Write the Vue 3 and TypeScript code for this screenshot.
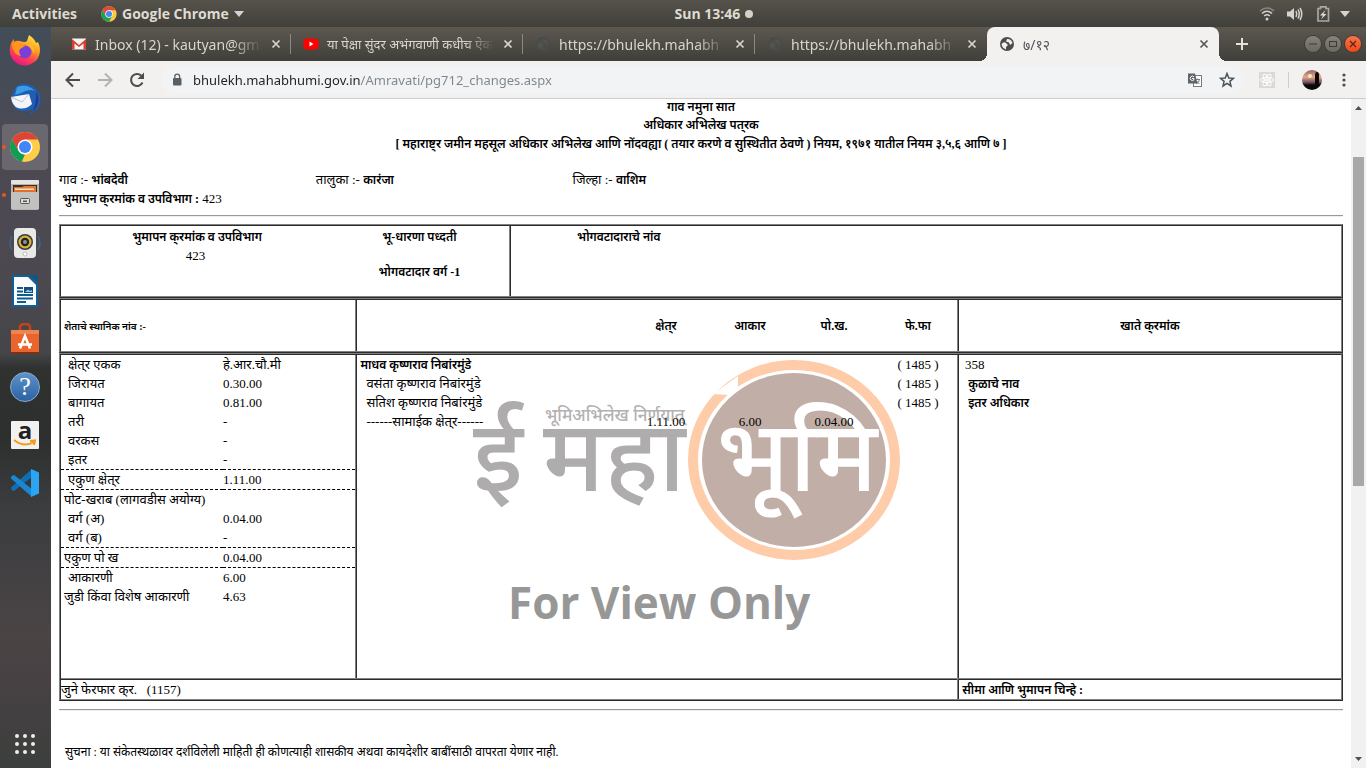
<script setup lang="ts">
interface Tab { title: string; icon: 'gmail' | 'youtube' | 'dim' | 'globe'; active?: boolean }
interface LandRow { label: string; value: string; indent?: boolean; rule?: boolean }
interface Owner { name: string; area?: string; tax?: string; waste?: string; mutation?: string; bold?: boolean }

const tabs: Tab[] = [
  { title: 'Inbox (12) - kautyan@gm', icon: 'gmail' },
  { title: 'या पेक्षा सुंदर अभंगवाणी कधीच ऐक', icon: 'youtube' },
  { title: 'https://bhulekh.mahabh', icon: 'dim' },
  { title: 'https://bhulekh.mahabh', icon: 'dim' },
  { title: '७/१२', icon: 'globe', active: true },
]

const land: LandRow[] = [
  { label: 'क्षेत्‌र एकक', value: 'हे.आर.चौ.मी', indent: true },
  { label: 'जिरायत', value: '0.30.00', indent: true },
  { label: 'बागायत', value: '0.81.00', indent: true },
  { label: 'तरी', value: '-', indent: true },
  { label: 'वरकस', value: '-', indent: true },
  { label: 'इतर', value: '-', indent: true, rule: true },
  { label: 'एकुण क्षेत्‌र', value: '1.11.00', indent: true, rule: true },
  { label: 'पोट-खराब (लागवडीस अयोग्य)', value: '' },
  { label: 'वर्ग (अ)', value: '0.04.00', indent: true },
  { label: 'वर्ग (ब)', value: '-', indent: true, rule: true },
  { label: 'एकुण पो ख', value: '0.04.00', rule: true },
  { label: 'आकारणी', value: '6.00', indent: true },
  { label: 'जुडी किंवा विशेष आकारणी', value: '4.63' },
]

const owners: Owner[] = [
  { name: 'माधव कृष्णराव निबांरमुंडे', mutation: '( 1485 )', bold: true },
  { name: 'वसंता कृष्णराव निबांरमुंडे', mutation: '( 1485 )' },
  { name: 'सतिश कृष्णराव निबांरमुंडे', mutation: '( 1485 )' },
  { name: '------सामाईक क्षेत्‌र------', area: '1.11.00', tax: '6.00', waste: '0.04.00' },
]
</script>

<template>
  <div class="desktop">
    <header class="topbar">
      <div class="top-left">
        <button class="top-btn">Activities</button>
        <button class="top-btn app-menu">
          <svg width="16" height="16" viewBox="0 0 48 48">
            <circle cx="24" cy="24" r="23" fill="#fbc93f" />
            <path d="M4 12.500A23 23 0 0 1 44 12.500L24 12.500L14 30Z" fill="#dd4b3e" />
            <path d="M4 12.500L14 30L34 30L24 47A23 23 0 0 1 4 12.500Z" fill="#1fa05a" />
            <circle cx="24" cy="24" r="11" fill="#fff" /><circle cx="24" cy="24" r="9" fill="#4688f4" />
          </svg>
          Google Chrome
          <svg width="10" height="6" viewBox="0 0 10 6"><path d="M0 0H10L5 6Z" fill="#d5d3cf" /></svg>
        </button>
      </div>
      <button class="top-btn clock">Sun 13:46 <span class="dot"></span></button>
      <button class="top-btn tray" aria-label="System">
        <span class="indicators">
          <svg width="16" height="16" viewBox="0 0 16 16" fill="none" stroke="#d5d3cf" stroke-width="1.600">
            <path d="M1 5Q8 -1 15 5" stroke="#85837e" /><path d="M3 7.500Q8 3 13 7.500" /><path d="M5.200 10Q8 7.500 10.800 10" /><circle cx="8" cy="13" r="1.500" fill="#d5d3cf" stroke="none" />
          </svg>
          <svg width="16" height="16" viewBox="0 0 16 16" fill="none" stroke="#d5d3cf" stroke-width="1.500">
            <path d="M0 5.500H3L7 2V14L3 10.500H0Z" fill="#d5d3cf" stroke="none" /><path d="M9 5Q10.500 8 9 11" /><path d="M11 3.500Q13.500 8 11 12.500" /><path d="M13 2Q16.500 8 13 14" />
          </svg>
          <svg width="16" height="16" viewBox="0 0 16 16" fill="none">
            <path d="M5 2.500H3V15H13.500V2.500H11V0.800H5.500V2.500Z" stroke="#aaa8a3" stroke-width="1.700" /><path d="M10.500 4L5 9.500H8L6 13.500L11.500 8H8.500Z" fill="#dfddd9" />
          </svg>
        </span>
        <svg width="10" height="6" viewBox="0 0 10 6"><path d="M0 0H10L5 6Z" fill="#d5d3cf" /></svg>
      </button>
    </header>

    <div class="workspace">
      <nav class="dock">
        <button class="dock-item" aria-label="Firefox">
          <svg width="32" height="32" viewBox="0 0 32 32">
            <defs><linearGradient id="ff" x1="0.8" y1="0" x2="0.3" y2="1"><stop offset="0" stop-color="#fff04a" /><stop offset="0.4" stop-color="#ff9a1f" /><stop offset="0.7" stop-color="#ff4050" /><stop offset="1" stop-color="#e4138f" /></linearGradient></defs>
            <path d="M20 0Q25 3 27 8L29 7Q32 13 30.500 19A15 14.500 0 0 1 1 18Q0 9 5 4V7Q7 5 11 6Q16 8 18 6Q19 3 20 0Z" fill="url(#ff)" />
            <circle cx="16" cy="17" r="6.500" fill="#7a3fd8" />
            <path d="M3 9Q8 5 11 8Q12 11 16 11L11 14Q9 17 12 21Q4 20 3 9Z" fill="#ff9420" />
            <path d="M17 8Q27 9 25 19Q23 13 17 8Z" fill="#ffb52c" />
          </svg>
        </button>
        <button class="dock-item" aria-label="Thunderbird">
          <svg width="32" height="32" viewBox="0 0 32 32">
            <path d="M7 4Q13 -2 23 3Q33 9 31 20Q29 29 20 31L26 25Q14 31 7 26Q1 20 4 9Z" fill="#1d5fb4" />
            <path d="M8 4Q18 0 26 8Q20 5 12 10L6 12Z" fill="#3d9be6" />
            <path d="M2 14L20 11L23 21Q17 27 9 25Q3 23 2 14Z" fill="#f3f5f8" /><path d="M2 14L13 19L20 11" fill="none" stroke="#bac3cc" />
            <path d="M27 8Q33 18 24 29Q28 18 27 8Z" fill="#243a86" />
          </svg>
        </button>
        <button class="dock-item current running" aria-label="Google Chrome">
          <svg width="32" height="32" viewBox="0 0 48 48">
            <circle cx="24" cy="24" r="22.500" fill="#ffcd46" />
            <path d="M4.500 12.700A22.500 22.500 0 0 1 43.500 12.700L24 12.700L14 30Z" fill="#dc4437" />
            <path d="M4.500 12.700L14.200 29.700Q18 35.300 24 35.300L19 46A22.500 22.500 0 0 1 4.500 12.700Z" fill="#119d58" />
            <circle cx="24" cy="24" r="11.300" fill="#fff" /><circle cx="24" cy="24" r="9" fill="#4285f4" />
          </svg>
        </button>
        <button class="dock-item running" aria-label="Files">
          <svg width="32" height="32" viewBox="0 0 32 32">
            <rect x="2" y="1" width="28" height="30" rx="2" fill="#b5b5b3" /><rect x="2" y="1" width="28" height="4" rx="1" fill="#e4e4e2" /><rect x="4" y="6" width="24" height="8" fill="#3b2f2b" /><path d="M5 8H13L15 7H27V14H5Z" fill="#e8762c" /><path d="M6 9.500H25V14H6Z" fill="#f7e3cf" /><path d="M6 11H25V14H6Z" fill="#e06f28" /><rect x="2" y="13" width="28" height="17" fill="#c1c1bf" /><rect x="11.500" y="19.500" width="9" height="5" rx="1" fill="#ddd" stroke="#555" /><rect x="14" y="21.500" width="4" height="1.500" fill="#555" />
          </svg>
        </button>
        <button class="dock-item" aria-label="Rhythmbox">
          <svg width="32" height="32" viewBox="0 0 32 32">
            <path d="M3 9Q-1 16 3 23M29 9Q33 16 29 23" stroke="#3e628c" fill="none" stroke-width="1.500" /><rect x="5" y="1" width="22" height="30" rx="4" fill="#e9e9e7" /><circle cx="16" cy="15" r="8" fill="#3b3b3a" /><circle cx="16" cy="15" r="6.500" fill="#d5b339" /><circle cx="16" cy="15" r="4.200" fill="#222" /><circle cx="16" cy="15" r="2" fill="#8c929b" /><circle cx="16" cy="27" r="2" fill="#fff" stroke="#bbb" />
          </svg>
        </button>
        <button class="dock-item" aria-label="LibreOffice Writer">
          <svg width="32" height="32" viewBox="0 0 32 32">
            <path d="M3 0H20L29 9V32H3Z" fill="#0e6098" /><path d="M5 2H19L27 10V30H5Z" fill="#fbfdfe" /><path d="M21 0H29V8Z" fill="#0c5689" /><path d="M8 13H14M8 16.500H14M8 20H24M8 23.500H24M8 27H17" stroke="#0e5c92" stroke-width="1.800" /><rect x="15" y="12" width="9" height="6" fill="#154e7d" /><path d="M16 17L19 14.500L21 16L23 15V17Z" fill="#8dc5e6" />
          </svg>
        </button>
        <button class="dock-item" aria-label="Ubuntu Software">
          <svg width="32" height="32" viewBox="0 0 32 32">
            <path d="M11 9V4Q11 1 16 1T21 4V9" fill="none" stroke="#c44318" stroke-width="2.500" /><path d="M2 7H30V29H2Z" fill="#e9652d" /><path d="M2 7H30V11H2Z" fill="#f08450" /><path d="M2 29H30V31H2Z" fill="#7d3114" /><path d="M11 25.500L16 13L21 25.500M9 21.500H23" fill="none" stroke="#fff" stroke-width="2.500" />
          </svg>
        </button>
        <button class="dock-item help" aria-label="Help"><span class="help-disc">?</span></button>
        <button class="dock-item" aria-label="Amazon"><span class="amazon">a<svg width="24" height="8" viewBox="0 0 24 8"><path d="M1 1Q11 9 21 3M17 2L22 1.500L21 6" fill="none" stroke="#f79a1c" stroke-width="2" /></svg></span></button>
        <button class="dock-item" aria-label="Visual Studio Code">
          <svg width="32" height="32" viewBox="0 0 32 32">
            <path d="M23 2V10L5 24Q4 24.500 2 22V20.500Z" fill="#0f6fb5" /><path d="M23 30V22L5 8Q4 7.500 2 10V11.500Z" fill="#1b87d3" /><path d="M22 2L30 5.500V26.500L22 30Z" fill="#2ba5f2" />
          </svg>
        </button>
        <button class="dock-apps" aria-label="Show Applications">
          <svg width="22" height="22" viewBox="0 0 22 22" fill="#eeeeec"><circle v-for="n in 9" :key="n" :cx="3 + ((n - 1) % 3) * 8" :cy="3 + Math.floor((n - 1) / 3) * 8" r="2" /></svg>
        </button>
      </nav>

      <div class="browser">
        <div class="tabstrip">
          <div class="tabs" role="tablist">
            <div v-for="(t, i) in tabs" :key="i" class="tab" :class="[t.icon, { active: t.active }]" role="tab">
              <svg v-if="t.icon === 'gmail'" width="16" height="16" viewBox="0 0 16 16"><path d="M1 2.500H15V13.500H1Z" fill="#f5f5f5" /><path d="M1 13.500V3L8 9L15 3V13.500H12.500V7.500L8 11L3.500 7.500V13.500Z" fill="#df3b30" /></svg>
              <svg v-else-if="t.icon === 'youtube'" width="16" height="16" viewBox="0 0 16 16"><rect x="0.500" y="2.500" width="15" height="11" rx="3" fill="#f00" /><path d="M6.500 5.500L10.500 8L6.500 10.500Z" fill="#fff" /></svg>
              <svg v-else width="16" height="16" viewBox="0 0 16 16"><circle cx="8" cy="8" r="7" :fill="t.active ? '#4a4c4e' : '#4b4b49'" /><path d="M2.500 8Q5 5 7 7L9 9L7 11V13.500Q3 12 2.500 8ZM8 3Q12 2.500 13.500 7L11 9L10 6.500L7 5.500Z" :fill="t.active ? '#f2f1f0' : '#54544f'" /></svg>
              <span class="tab-title">{{ t.title }}</span>
              <button class="tab-close" aria-label="Close tab"><svg width="10" height="10" viewBox="0 0 10 10"><path d="M1.500 1.500L8.500 8.500M8.500 1.500L1.500 8.500" stroke="currentColor" stroke-width="1.700" /></svg></button>
            </div>
          </div>
          <button class="new-tab" aria-label="New tab"><svg width="12" height="12" viewBox="0 0 12 12"><path d="M6 0V12M0 6H12" stroke="#e4e2dd" stroke-width="2" /></svg></button>
          <div class="window-buttons">
            <button aria-label="Minimize"><svg width="16" height="16" viewBox="0 0 16 16"><path d="M4 8H12" stroke="#3b3a36" /></svg></button>
            <button aria-label="Maximize"><svg width="16" height="16" viewBox="0 0 16 16"><rect x="4.500" y="5.500" width="7" height="5" fill="none" stroke="#3b3a36" /></svg></button>
            <button class="close" aria-label="Close"><svg width="16" height="16" viewBox="0 0 16 16"><path d="M5 5L11 11M11 5L5 11" stroke="#5b2413" stroke-width="1.300" /></svg></button>
          </div>
        </div>

        <div class="toolbar">
          <button aria-label="Back"><svg width="16" height="16" viewBox="0 0 16 16"><path d="M15 8H2M8 1.500L1.500 8L8 14.500" fill="none" stroke="#4a4c4e" stroke-width="2" /></svg></button>
          <button aria-label="Forward"><svg width="16" height="16" viewBox="0 0 16 16"><path d="M1 8H14M8 1.500L14.500 8L8 14.500" fill="none" stroke="#b3b2b1" stroke-width="2" /></svg></button>
          <button aria-label="Reload"><svg width="16" height="16" viewBox="0 0 16 16"><path d="M13.500 10.500A6 6 0 1 1 12.300 3.700" fill="none" stroke="#4a4c4e" stroke-width="2" /><path d="M15 0.500V7H8.500Z" fill="#4a4c4e" /></svg></button>
          <div class="omnibox">
            <svg width="10" height="14" viewBox="0 0 10 14"><rect x="1" y="5" width="8.500" height="7.500" rx="1" fill="#5b5f63" /><path d="M2.800 5V3.500Q2.800 1.200 5.200 1.200T7.600 3.500V5" fill="none" stroke="#5b5f63" stroke-width="1.300" /></svg>
            <input class="url" type="text" aria-label="Address" value="bhulekh.mahabhumi.gov.in/Amravati/pg712_changes.aspx" spellcheck="false">
            <button aria-label="Translate"><svg width="16" height="16" viewBox="0 0 16 16"><rect x="6.500" y="3.500" width="8" height="11" fill="#fff" stroke="#777b80" /><path d="M8.500 7.500H13M10.800 6.500V7.500M12.500 7.500Q12 10.500 9 12M9.500 9L12.500 12" stroke="#777b80" fill="none" /><path d="M1 1.500H8L10.500 11.500H1Z" fill="#5f6368" /><path d="M7 4.800A2.200 2.200 0 1 0 7 7.800V6.500H5" fill="none" stroke="#fff" /></svg></button>
            <button aria-label="Bookmark"><svg width="16" height="16" viewBox="0 0 16 16"><path d="M8 1.500L9.800 6L14.500 6.300L10.900 9.300L12 14L8 11.400L4 14L5.100 9.300L1.500 6.300L6.200 6Z" fill="none" stroke="#4e5257" stroke-width="1.500" /></svg></button>
          </div>
          <button class="ext" aria-label="React Developer Tools"><svg width="16" height="16" viewBox="0 0 16 16" fill="none" stroke="#fff"><rect width="16" height="16" fill="#dad9d8" stroke="none" /><ellipse cx="8" cy="8" rx="6.500" ry="2.500" /><ellipse cx="8" cy="8" rx="6.500" ry="2.500" transform="rotate(60 8 8)" /><ellipse cx="8" cy="8" rx="6.500" ry="2.500" transform="rotate(120 8 8)" /><circle cx="8" cy="8" r="1" fill="#fff" /></svg></button>
          <span class="divider"></span>
          <button aria-label="Profile"><svg width="20" height="20" viewBox="0 0 20 20"><defs><linearGradient id="av" x2="0" y2="1"><stop offset="0" stop-color="#8d6666" /><stop offset="0.350" stop-color="#e3ab8a" /><stop offset="0.620" stop-color="#70505c" /><stop offset="0.750" stop-color="#0b080a" /></linearGradient></defs><circle cx="10" cy="10" r="10" fill="url(#av)" /><circle cx="8" cy="6" r="2" fill="#ffe5bd" /><path d="M13 17V6Q13 2 15 2T17 6V15Z" fill="#0b0809" /></svg></button>
          <button class="menu" aria-label="Menu"><svg width="4" height="14" viewBox="0 0 4 14" fill="#4a4c4e"><circle cx="2" cy="2" r="1.600" /><circle cx="2" cy="7" r="1.600" /><circle cx="2" cy="12" r="1.600" /></svg></button>
        </div>

        <div class="viewport">
          <main class="page">
            <div class="heading">
              <p class="first">गाव नमुना सात</p>
              <p>अधिकार अभिलेख पत्‌रक</p>
              <p>[ महाराष्ट्‌र जमीन महसूल अधिकार अभिलेख आणि नोंदवह्या ( तयार करणे व सुस्थितीत ठेवणे ) नियम, १९७१ यातील नियम ३,५,६ आणि ७ ]</p>
            </div>
            <div class="place">
              <span>गाव :- <b>भांबदेवी</b></span>
              <span>तालुका :- <b>कारंजा</b></span>
              <span>जिल्हा :- <b>वाशिम</b></span>
            </div>
            <p>&nbsp;<b>भुमापन क्‌रमांक व उपविभाग :</b> 423</p>
            <hr>

            <table class="sheet tenure">
              <colgroup><col class="c-survey"><col class="c-tenure"><col class="c-holder"><col></colgroup>
              <tbody>
                <tr>
                  <td class="center"><p>&nbsp;<b>भुमापन क्‌रमांक व उपविभाग</b></p><p>423</p></td>
                  <td class="center"><p><b>भू-धारणा पध्दती</b></p><p class="class-one"><b>भोगवटादार वर्ग -1</b></p></td>
                  <td class="center edge"><b>भोगवटादाराचे नांव</b></td>
                  <td></td>
                </tr>
              </tbody>
            </table>

            <table class="sheet columns">
              <colgroup><col class="c-left"><col><col class="c-num"><col class="c-num"><col class="c-num"><col class="c-num"><col class="c-right"></colgroup>
              <thead>
                <tr>
                  <th class="local">शेताचे स्थानिक नांव :-</th>
                  <th class="edge"></th>
                  <th class="num">क्षेत्‌र</th><th class="num">आकार</th><th class="num">पो.ख.</th><th class="num">फे.फा</th>
                  <th class="edge">खाते क्‌रमांक</th>
                </tr>
              </thead>
            </table>

            <table class="sheet details">
              <colgroup><col class="c-left"><col><col class="c-right"></colgroup>
              <tbody>
                <tr class="body-row">
                  <td>
                    <table class="inner land">
                      <colgroup><col class="c-label"><col></colgroup>
                      <tbody>
                        <tr v-for="r in land" :key="r.label" :class="{ rule: r.rule }">
                          <td v-if="!r.value" colspan="2" class="label">{{ r.label }}</td>
                          <template v-else><td class="label" :class="{ indent: r.indent }">{{ r.label }}</td><td>{{ r.value }}</td></template>
                        </tr>
                      </tbody>
                    </table>
                  </td>
                  <td class="edge holders">
                    <svg class="watermark" width="430" height="272" viewBox="0 0 430 272">
                      <text x="0" y="130" class="wm-big" fill="#aeacad">ई</text>
                      <text x="70" y="130" class="wm-big" fill="#aeacad">महा</text>
                      <text x="72" y="60" class="wm-small" fill="#b3b1b2">भूमिअभिलेख निर्णयात्</text>
                      <ellipse cx="321" cy="99" rx="101" ry="95" fill="#fff" stroke="#ffccaa" stroke-width="10" />
                      <path d="M240 33L265 15L265 26L256 34Z" fill="#fff" />
                      <ellipse cx="321" cy="99" rx="92" ry="87" fill="#c0aea7" />
                      <text x="324" y="130" text-anchor="middle" class="wm-big" fill="#fff">भूमि</text>
                      <text x="35" y="258" class="wm-view" fill="#979797">For View Only</text>
                    </svg>
                    <table class="inner owners">
                      <colgroup><col><col class="c-num"><col class="c-num"><col class="c-num"><col class="c-num"></colgroup>
                      <tbody>
                        <tr v-for="o in owners" :key="o.name">
                          <td class="owner" :class="{ main: o.bold }">{{ o.name }}</td>
                          <td class="num">{{ o.area }}</td><td class="num">{{ o.tax }}</td><td class="num">{{ o.waste }}</td><td class="num">{{ o.mutation }}</td>
                        </tr>
                      </tbody>
                    </table>
                  </td>
                  <td class="edge rights"><p>358</p><p>&nbsp;<b>कुळाचे नाव</b></p><p>&nbsp;<b>इतर अधिकार</b></p></td>
                </tr>
                <tr class="foot-row">
                  <td colspan="2">जुने फेरफार क्‌र. &nbsp; (1157)</td>
                  <td class="edge">&nbsp;<b>सीमा आणि भुमापन चिन्हे :</b></td>
                </tr>
              </tbody>
            </table>
            <hr>
            <p class="notice">सुचना : या संकेतस्थळावर दर्शविलेली माहिती ही कोणत्याही शासकीय अथवा कायदेशीर बाबींसाठी वापरता येणार नाही.</p>
          </main>
          <div class="scrollbar" aria-hidden="true">
            <svg width="15" height="17" viewBox="0 0 15 17"><path d="M4 11H11L7.500 7Z" fill="#505050" /></svg>
            <span class="before"></span><span class="thumb"></span><span class="after"></span>
            <svg width="15" height="17" viewBox="0 0 15 17"><path d="M4 6H11L7.500 10Z" fill="#505050" /></svg>
          </div>
        </div>
      </div>
    </div>
  </div>
</template>

<style>
body { margin: 0; overflow: hidden; }
</style>

<style scoped>
* { box-sizing: border-box; }
button { border: 0; padding: 0; background: none; font: inherit; color: inherit; }
svg { display: block; flex: none; }
p { margin: 0; }
.desktop { height: 100vh; display: flex; flex-direction: column; font-family: "Noto Sans", "Open Sans", sans-serif; }
.topbar { flex: none; height: 27px; display: grid; grid-template-columns: 1fr auto 1fr; align-items: center; padding: 0 16px 0 12px; background: linear-gradient(#56534b, #403f3a); color: #dfdbd2; font: 700 14px "Open Sans", "Noto Sans", sans-serif; }
.top-left { display: flex; gap: 24px; }
.top-btn { display: flex; align-items: center; gap: 5px; white-space: nowrap; }
.clock { padding-left: 66px; }
.dot { width: 8px; height: 8px; border-radius: 50%; background: #d3d0ca; }
.tray { justify-self: end; gap: 9px; }
.indicators { display: flex; gap: 12px; }
.workspace { flex: 1; min-height: 0; display: flex; }
.dock { flex: none; width: 51px; display: flex; flex-direction: column; align-items: center; gap: 2px; padding: 1px 1px 10px 0; background: linear-gradient(#414d58, #4d4953 20%, #4b484f 35%, #454649 44%, #303230 46%, #2c2f2d 55%, #3b3d3f 65%, #4a4445 82%, #484143 88%, #3c3f3d); }
.dock-item { position: relative; width: 46px; height: 46px; display: grid; place-items: center; border-radius: 4px; }
.dock-item.current { background: #6a676e; }
.dock-item.running::before { content: ""; position: absolute; left: 0; top: 21px; width: 4px; height: 4px; border-radius: 50%; background: #e95420; }
.dock-apps { margin-top: auto; padding: 3px; }
.help-disc { width: 30px; height: 30px; border-radius: 50%; border: 1px solid #89abd1; background: linear-gradient(#5d92c9, #2c62a3); color: #fff; font: 26px/28px "Liberation Serif", serif; text-align: center; }
.amazon { width: 28px; height: 28px; background: #f1f1ef; color: #222; font: bold 24px/18px "Open Sans", sans-serif; display: flex; flex-direction: column; align-items: center; border-radius: 1px; }
.browser { flex: 1; min-width: 0; display: flex; flex-direction: column; background: #fff; }
.tabstrip { flex: none; height: 34px; display: flex; align-items: center; padding: 0 5px 0 8px; background: linear-gradient(#5c5850, #403f3a); color: #d8d5cf; }
.tabs { flex: 0 1 1160px; min-width: 0; display: flex; height: 34px; }
.tab { position: relative; flex: 1; min-width: 0; display: flex; align-items: center; gap: 8px; padding: 0 9px 0 12px; font-size: 14px; }
.tab.youtube { font-size: 13px; }
.tab:nth-child(-n+3)::after { content: ""; position: absolute; right: 0; top: 7px; width: 1px; height: 20px; background: #8b8881; }
.tab-title { flex: 1; min-width: 0; overflow: hidden; white-space: nowrap; mask-image: linear-gradient(to right, #000 82%, transparent); }
.tab-close { padding: 1px; }
.tab.active { background: #f2f1f0; color: #55585b; border-radius: 8px 8px 0 0; }
.tab.active::before { content: ""; position: absolute; left: -8px; right: -8px; bottom: 0; height: 8px; background: radial-gradient(circle at 0 0, transparent 8px, #f2f1f0 8px) left / 8px 8px no-repeat, radial-gradient(circle at 100% 0, transparent 8px, #f2f1f0 8px) right / 8px 8px no-repeat; }
.new-tab { margin-left: 17px; }
.window-buttons { margin-left: auto; display: flex; gap: 4px; }
.window-buttons button { border-radius: 50%; background: linear-gradient(#85827b, #6b6962); box-shadow: 0 0 0 1px #3d3b37; }
.window-buttons .close { background: linear-gradient(#f9744c, #ee4815); }
.toolbar { flex: none; height: 38px; display: flex; align-items: center; padding: 0 20px 0 14px; background: #f2f1f0; border-bottom: 1px solid #cecdcc; }
.toolbar > button { margin-right: 16px; }
.omnibox { flex: 1; min-width: 0; height: 28px; display: flex; align-items: center; gap: 16px; padding: 0 9px 0 11px; margin-right: 15px; border-radius: 14px; background: #f1f3f4; }
.url { flex: 1; min-width: 0; margin-left: -5px; border: 0; padding: 0; outline: 0; font: 13px "Noto Sans", sans-serif; color: #202124; background: linear-gradient(to right, #202124 167px, #808488 167px) text; -webkit-text-fill-color: transparent; }
.toolbar > .ext { margin-right: 13px; }
.divider { width: 1px; height: 16px; margin-right: 13px; background: #cfcecd; }
.toolbar > .menu { margin: 0 0 0 4px; }
.viewport { flex: 1; min-height: 0; display: flex; }
.page { flex: 1; min-width: 0; overflow: hidden; padding: 0 8px; color: #000; font: 13px/19px "Liberation Serif", "Noto Sans Devanagari", serif; }
.page b, .page th { font-size: 12px; font-weight: 600; }
.page b { line-height: 1; }
.heading { text-align: center; font-size: 12px; font-weight: 600; margin-bottom: 16px; }
.heading .first { line-height: 17px; }
.place { display: grid; grid-template-columns: 1fr 1fr 3fr; }
hr { margin: 7px 0; border: 0; border-top: 1px solid #999; border-bottom: 1px solid #eee; }
.sheet { width: 100%; table-layout: fixed; border-collapse: separate; border-spacing: 0; border: 2px ridge gray; }
td, th { padding: 0; vertical-align: top; text-align: left; }
.center { text-align: center; }
.num { padding-left: 6px; text-align: center; }
.edge { border-left: 2px ridge gray; }
.c-survey { width: 21%; }
.c-tenure { width: 14%; }
.c-holder { width: 17%; }
.c-left { width: 23%; }
.c-right { width: 30%; }
.c-num { width: 84px; }
.tenure { height: 74px; }
.tenure td { padding-top: 1px; }
.class-one { margin-top: 16px; }
.columns { height: 55px; }
.columns th { padding-top: 2px; vertical-align: middle; text-align: center; }
.columns .local { padding-left: 3px; text-align: left; font-size: 10px; }
.details { margin-bottom: 8px; line-height: 18px; }
.body-row { height: 323px; }
.foot-row td { border-top: 2px ridge gray; height: 21px; padding-top: 1px; }
.inner { width: 100%; table-layout: fixed; border-collapse: separate; border-spacing: 0; }
.inner td, .rights p { padding-top: 1px; }
.c-label { width: 55%; }
.rule td { border-bottom: 1px dashed #000; }
.label { padding-left: 3px; }
.label.indent { padding-left: 7px; }
.holders { position: relative; }
.owners { position: relative; }
.owner { padding-left: 9px; }
.owner.main { padding-left: 3px; font-size: 12px; font-weight: 600; }
.rights { padding-left: 6px; }
.watermark { position: absolute; left: 116px; top: 6px; overflow: visible; }
.wm-big { font: 500 100px "Noto Sans", "Noto Sans Devanagari", sans-serif; }
.wm-small { font: 500 17px "Noto Sans", "Noto Sans Devanagari", sans-serif; }
.wm-view { font: bold 44px "Open Sans", sans-serif; }
.notice { margin-top: 32px; padding-left: 6px; font-size: 12px; }
.scrollbar { flex: none; width: 15px; display: flex; flex-direction: column; align-items: center; background: #f1f1f1; }
.before { flex: 41; }
.thumb { flex: 329; width: 11px; background: #a8a8a8; }
.after { flex: 265; }
</style>
